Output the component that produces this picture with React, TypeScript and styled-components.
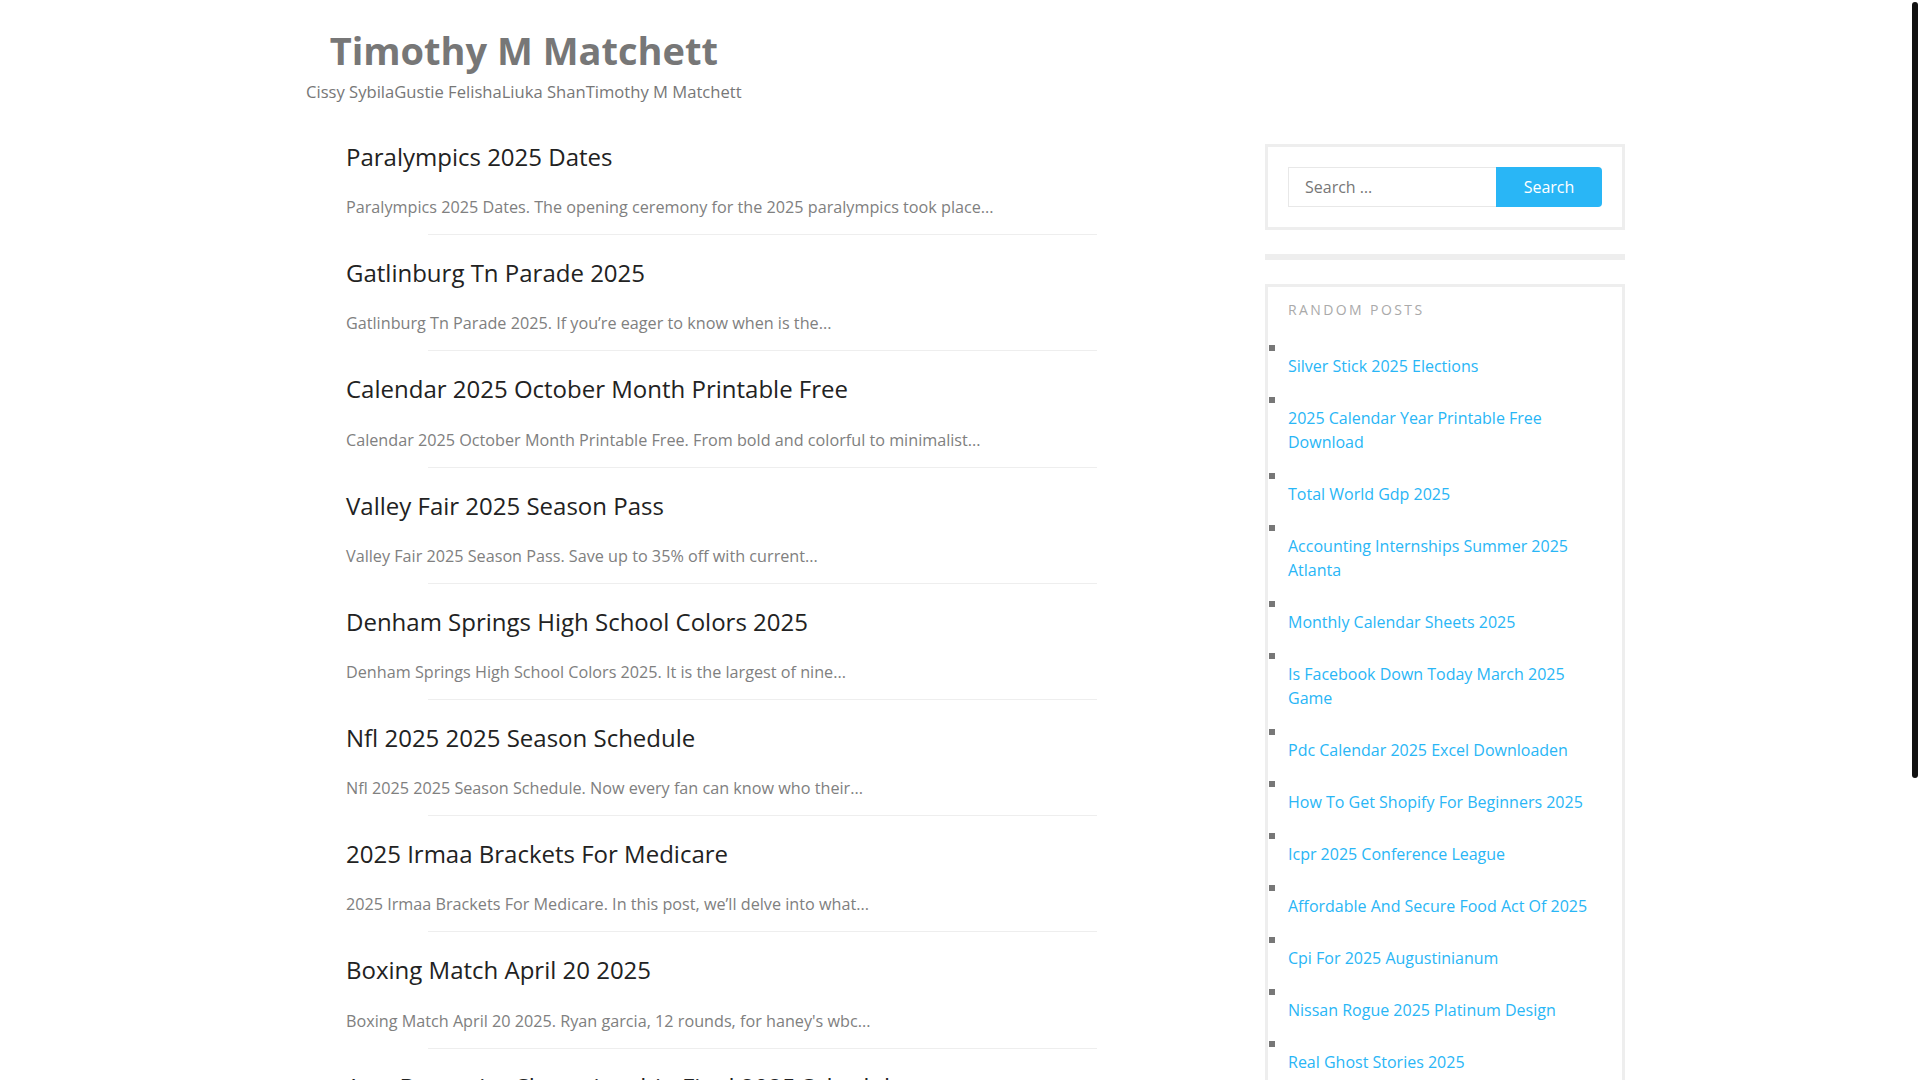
import React from 'react';
import styled, { createGlobalStyle } from 'styled-components';

const GlobalStyle = createGlobalStyle`
  html, body {
    margin: 0;
    padding: 0;
    background: #fff;
    font-family: 'Open Sans', 'Liberation Sans', sans-serif;
  }
`;

// the page's own thin dark scrollbar thumb, drawn over the right edge
const ScrollThumb = styled.div`
  position: fixed;
  top: 2px;
  right: 2px;
  width: 6px;
  height: 776px;
  border-radius: 3px;
  background: #111;
`;

const Page = styled.div`
  width: 1319px;
  margin-left: 306px;
  min-height: 1500px;
`;

const Header = styled.header`
  padding-top: 26px;
`;

const Branding = styled.div`
  display: inline-block;
  text-align: center;
`;

const SiteTitle = styled.h1`
  margin: 0;
  font-size: 38px;
  line-height: 48px;
  font-weight: 700;
  color: #777;
`;

const SiteDescription = styled.p`
  margin: 6px 0 0;
  font-size: 16.6px;
  line-height: 24px;
  color: #777;
`;

const Row = styled.div`
  display: flex;
  align-items: flex-start;
  margin-top: 40px;
`;

const Main = styled.main`
  width: 751px;
  margin-left: 40px;
`;

const Post = styled.article`
  padding-bottom: 25px;
`;

const PostTitle = styled.h2`
  margin: 0 0 25px;
  font-size: 24px;
  line-height: 26.2px;
  font-weight: 400;
  color: #222;
`;

const Excerpt = styled.p`
  margin: 0 0 15px;
  font-size: 16.2px;
  line-height: 24px;
  color: #808080;
`;

const Divider = styled.div`
  height: 1px;
  margin-left: 82px;
  background: #eee;
`;

const Sidebar = styled.aside`
  width: 360px;
  margin-left: 168px;
  display: flex;
  flex-direction: column;
  gap: 24px;
`;

const Widget = styled.section<{ $pad?: string }>`
  border: 3px solid #eee;
  padding: ${(p) => p.$pad ?? '20px'};
`;

const SearchForm = styled.form`
  display: flex;
`;

const SearchInput = styled.input`
  flex: 1;
  min-width: 0;
  height: 40px;
  box-sizing: border-box;
  border: 1px solid #e8e8e8;
  border-right: none;
  padding: 0 16px;
  font-family: 'Open Sans', 'Liberation Sans', sans-serif;
  font-size: 16px;
  color: #777;
  outline: none;

  &::placeholder {
    color: #777;
  }
`;

const SearchButton = styled.button`
  width: 106px;
  height: 40px;
  border: none;
  border-radius: 0 4px 4px 0;
  background: #29b6f6;
  color: #fff;
  font-family: 'Open Sans', 'Liberation Sans', sans-serif;
  font-size: 16px;
  cursor: pointer;
`;

const WidgetTitle = styled.h3`
  margin: 0;
  font-size: 14px;
  line-height: 20px;
  font-weight: 400;
  letter-spacing: 2.4px;
  text-transform: uppercase;
  color: #aaa;
`;

const PostList = styled.ul`
  list-style: none;
  margin: 25px 0 0;
  padding: 0;
`;

const PostItem = styled.li`
  margin-bottom: 19px;
`;

const Bullet = styled.span`
  display: block;
  width: 6px;
  height: 6px;
  margin: 0 0 3px -19px;
  background: #777;
`;

const PostLink = styled.a`
  display: block;
  font-size: 16px;
  line-height: 24px;
  color: #29b6f6;
  text-decoration: none;
`;

const posts = [
  ['Paralympics 2025 Dates', 'Paralympics 2025 Dates. The opening ceremony for the 2025 paralympics took place...'],
  ['Gatlinburg Tn Parade 2025', 'Gatlinburg Tn Parade 2025. If you’re eager to know when is the...'],
  ['Calendar 2025 October Month Printable Free', 'Calendar 2025 October Month Printable Free. From bold and colorful to minimalist...'],
  ['Valley Fair 2025 Season Pass', 'Valley Fair 2025 Season Pass. Save up to 35% off with current...'],
  ['Denham Springs High School Colors 2025', 'Denham Springs High School Colors 2025. It is the largest of nine...'],
  ['Nfl 2025 2025 Season Schedule', 'Nfl 2025 2025 Season Schedule. Now every fan can know who their...'],
  ['2025 Irmaa Brackets For Medicare', '2025 Irmaa Brackets For Medicare. In this post, we’ll delve into what...'],
  ['Boxing Match April 20 2025', "Boxing Match April 20 2025. Ryan garcia, 12 rounds, for haney's wbc..."],
  ['Aew Dynamite Championship Final 2025 Schedule', 'Aew Dynamite Championship Final 2025 Schedule. Here is the full list of...'],
];

const randomPosts = [
  'Silver Stick 2025 Elections',
  '2025 Calendar Year Printable Free Download',
  'Total World Gdp 2025',
  'Accounting Internships Summer 2025 Atlanta',
  'Monthly Calendar Sheets 2025',
  'Is Facebook Down Today March 2025 Game',
  'Pdc Calendar 2025 Excel Downloaden',
  'How To Get Shopify For Beginners 2025',
  'Icpr 2025 Conference League',
  'Affordable And Secure Food Act Of 2025',
  'Cpi For 2025 Augustinianum',
  'Nissan Rogue 2025 Platinum Design',
  'Real Ghost Stories 2025',
];

const App: React.FC = () => {
  return (
    <>
      <GlobalStyle />
      <Page>
        <Header>
          <Branding>
            <SiteTitle>Timothy M Matchett</SiteTitle>
            <SiteDescription>Cissy SybilaGustie FelishaLiuka ShanTimothy M Matchett</SiteDescription>
          </Branding>
        </Header>

        <Row>
          <Main>
            {posts.map(([title, excerpt]) => (
              <Post key={title}>
                <PostTitle>{title}</PostTitle>
                <Excerpt>{excerpt}</Excerpt>
                <Divider />
              </Post>
            ))}
          </Main>

          <Sidebar>
            <Widget>
              <SearchForm onSubmit={(e) => e.preventDefault()}>
                <SearchInput type="search" placeholder="Search …" />
                <SearchButton type="submit">Search</SearchButton>
              </SearchForm>
            </Widget>

            <Widget $pad="0" />

            <Widget $pad="13px 20px 20px">
              <WidgetTitle>Random Posts</WidgetTitle>
              <PostList>
                {randomPosts.map((t) => (
                  <PostItem key={t}>
                    <Bullet />
                    <PostLink href="#">{t}</PostLink>
                  </PostItem>
                ))}
              </PostList>
            </Widget>
          </Sidebar>
        </Row>
      </Page>
      <ScrollThumb />
    </>
  );
};

export default App;
